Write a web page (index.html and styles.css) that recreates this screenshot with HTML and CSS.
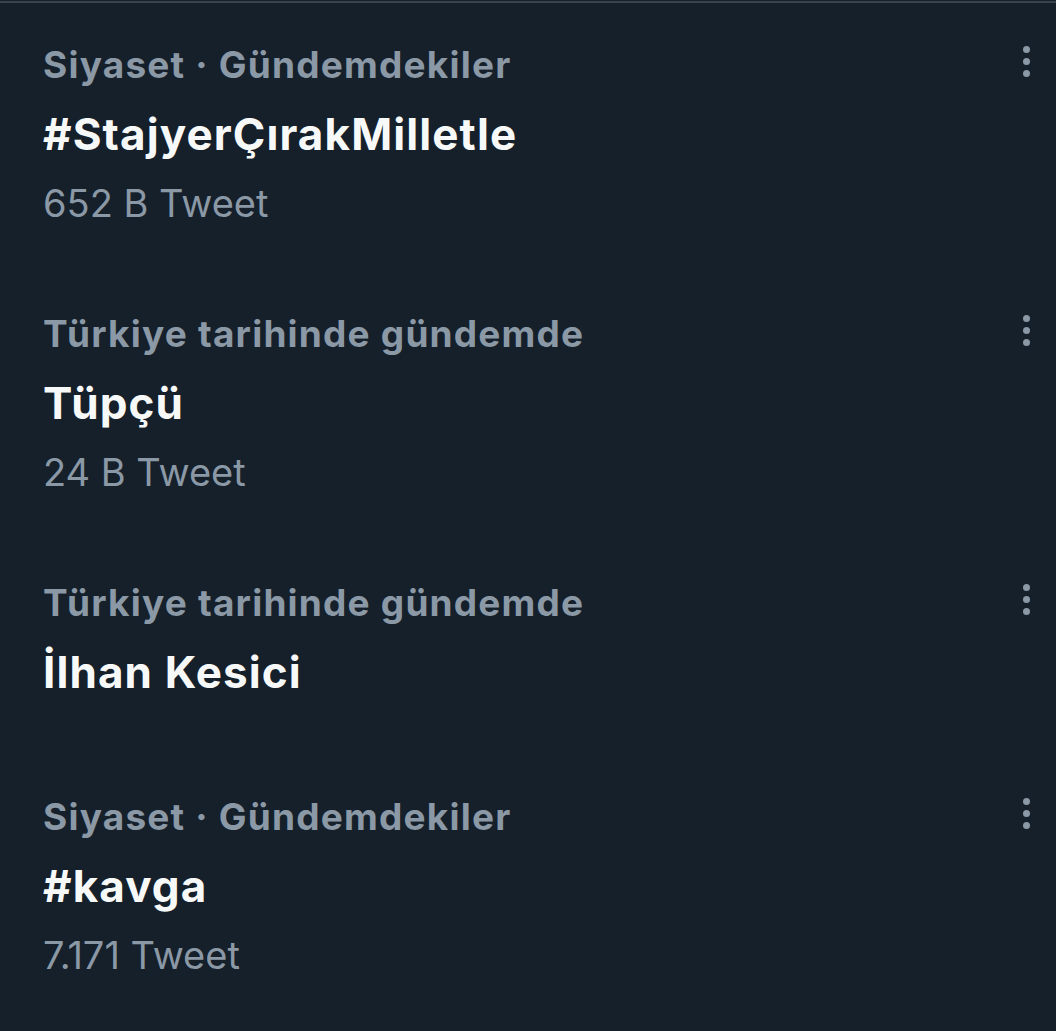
FILE: index.html
```html
<!DOCTYPE html>
<html lang="tr">
<head>
<meta charset="utf-8">
<title>Gündem</title>
<link rel="stylesheet" href="styles.css">
</head>
<body>
<div class="list">
  <div class="trend">
    <div class="info">
      <div class="meta">Siyaset · Gündemdekiler</div>
      <div class="title">#StajyerÇırakMilletle</div>
      <div class="count">652 B Tweet</div>
    </div>
    <div class="more"><span></span><span></span><span></span></div>
  </div>
  <div class="trend">
    <div class="info">
      <div class="meta">Türkiye tarihinde gündemde</div>
      <div class="title">Tüpçü</div>
      <div class="count">24 B Tweet</div>
    </div>
    <div class="more"><span></span><span></span><span></span></div>
  </div>
  <div class="trend nocount">
    <div class="info">
      <div class="meta">Türkiye tarihinde gündemde</div>
      <div class="title">İlhan Kesici</div>
    </div>
    <div class="more"><span></span><span></span><span></span></div>
  </div>
  <div class="trend">
    <div class="info">
      <div class="meta">Siyaset · Gündemdekiler</div>
      <div class="title">#kavga</div>
      <div class="count">7.171 Tweet</div>
    </div>
    <div class="more"><span></span><span></span><span></span></div>
  </div>
</div>
</body>
</html>
```
FILE: styles.css
```css
html, body {
  margin: 0;
  padding: 0;
  background: #15202b;
}
body {
  padding-top: 1px;
  font-family: Inter, Roboto, "Liberation Sans", sans-serif;
  height: 1030px;
  overflow: hidden;
}
.list {
  border-top: 2px solid #38444d;
  padding-top: 42px;
}
.trend {
  display: flex;
  justify-content: space-between;
  align-items: flex-start;
  padding: 0 23px 0 43px;
  margin-bottom: 86px;
}
.trend.nocount {
  margin-bottom: 89px;
}
.meta {
  font-size: 37px;
  line-height: 40px;
  font-weight: 700;
  letter-spacing: 1.2px;
  color: #8b98a5;
}
.title {
  margin-top: 13px;
  font-size: 44px;
  line-height: 72px;
  font-weight: 700;
  letter-spacing: 1.1px;
  color: #f7f9f9;
}
.count {
  margin-top: 8px;
  font-size: 38px;
  line-height: 50px;
  font-weight: 400;
  color: #8b98a5;
}
.more {
  display: flex;
  flex-direction: column;
  gap: 5px;
  width: 14px;
  align-items: center;
  margin-top: 1px;
}
.more span {
  width: 7px;
  height: 7px;
  border-radius: 50%;
  background: #8b98a5;
}
```
